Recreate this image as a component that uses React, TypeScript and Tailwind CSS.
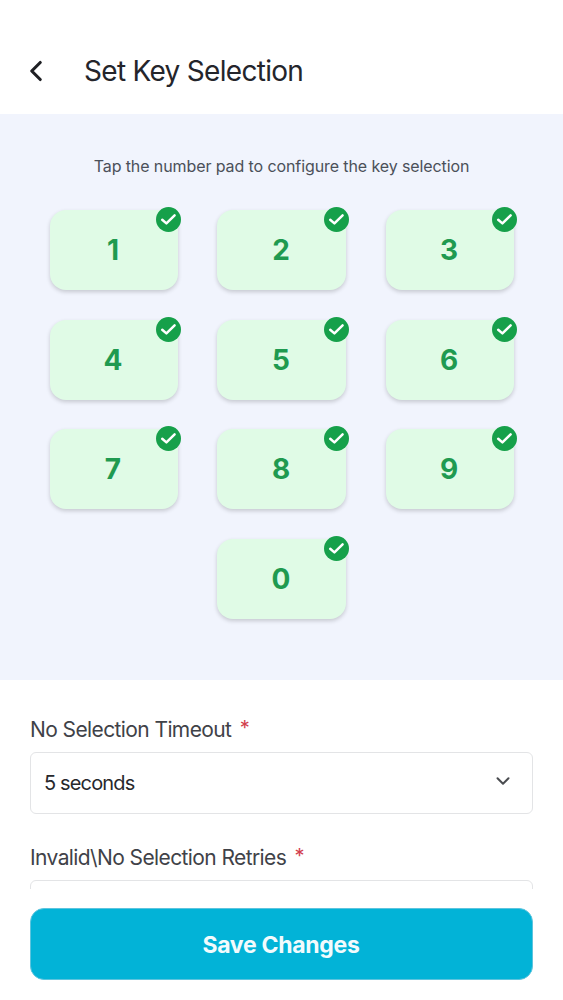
import React from 'react';
import { ChevronDown, ChevronLeft } from 'lucide-react';

const keys = ['1', '2', '3', '4', '5', '6', '7', '8', '9', '', '0', ''];

const CheckBadge = () => (
  <span className="absolute -top-[3px] -right-[3px] flex h-[25px] w-[25px] items-center justify-center rounded-full bg-[#16a04a]">
    <svg width="19" height="19" viewBox="0 0 19 19" fill="none">
      <path d="M3.2 9.8l4.2 3.6 8.2-8" stroke="white" strokeWidth="2.5" strokeLinecap="round" strokeLinejoin="round" />
    </svg>
  </span>
);

const Field = ({ label, children }: { label: string; children?: React.ReactNode }) => (
  <div>
    <div className="h-[28px] text-[21px] leading-[28px] tracking-[-0.6px] text-[#3f4248]">
      {label} <span className="relative -top-[2px] ml-[3px] text-[20px] leading-none text-[#d2404d]">*</span>
    </div>
    {children}
  </div>
);

export default function App() {
  return (
    <div className="relative flex h-[1000px] w-[563px] flex-col overflow-hidden bg-white font-['Inter',sans-serif]">
      {/* Header */}
      <div className="flex h-[114px] items-center pl-[19px] pt-[28px]">
        <ChevronLeft className="h-[34px] w-[34px] text-[#1f2024]" strokeWidth={2.2} />
        <h1 className="ml-[31px] text-[28px] font-normal leading-[34px] tracking-[-0.7px] text-[#24252b]">Set Key Selection</h1>
      </div>

      {/* Number pad */}
      <div className="flex h-[566px] flex-col items-center bg-[#f1f4fd] pt-[41px]">
        <p className="text-[16px] leading-[22px] tracking-[-0.1px] text-[#4b5059]">Tap the number pad to configure the key selection</p>
        <div className="mt-[33px] grid grid-cols-[128px_129px_128px] gap-x-[39.5px] gap-y-[29.5px]">
          {keys.map((key, index) =>
            key === '' ? (
              <div key={index} />
            ) : (
              <div
                key={index}
                className="relative flex h-[80px] items-center justify-center rounded-[16px] bg-[#e0fbe6] pr-[1px] text-[28px] font-bold text-[#1f9a50] shadow-[0_2px_4px_rgba(0,0,0,0.18)]"
              >
                {key}
                <CheckBadge />
              </div>
            ),
          )}
        </div>
      </div>

      {/* Form */}
      <div className="flex flex-col gap-[30px] px-[30px] pt-[36px]">
        <Field label="No Selection Timeout">
          <div className="mt-[8px] flex h-[62px] items-center justify-between rounded-[6px] border border-[#e3e4e6] pl-[13px] pr-[18px]">
            <span className="text-[20px] tracking-[-0.85px] text-[#27282c]">5 seconds</span>
            <ChevronDown className="h-[22px] w-[22px] -translate-y-[2px] text-[#4a4c50]" strokeWidth={2.2} />
          </div>
        </Field>
        <Field label="Invalid\No Selection Retries">
          <div className="mt-[8px] h-[62px] rounded-[6px] border border-[#e3e4e6]" />
        </Field>
      </div>

      {/* Save bar */}
      <div className="absolute inset-x-0 bottom-0 h-[111px] bg-white px-[30px] pt-[19px]">
        <button className="flex h-[72px] w-full items-center justify-center rounded-[14px] border border-[#5cc4de] bg-[#02b3d7] pt-[2px] pr-[1px] text-[23px] font-bold tracking-[-0.3px] text-[#f2fbfd]">
          Save Changes
        </button>
      </div>
    </div>
  );
}
